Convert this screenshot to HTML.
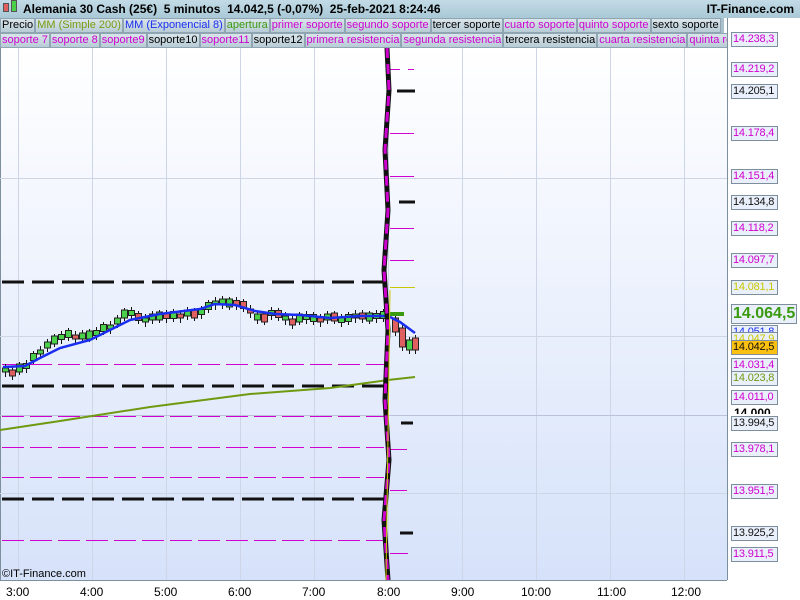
<!DOCTYPE html>
<html><head><meta charset="utf-8"><style>
*{margin:0;padding:0;box-sizing:border-box}
body{width:800px;height:600px;overflow:hidden;background:#fff;font-family:"Liberation Sans",sans-serif;position:relative}
#hdr{position:absolute;left:0;top:0;width:800px;height:18px;background:linear-gradient(#c2dbe6,#a9c8d6);font-weight:bold;font-size:12px;line-height:18px}
.leg{position:absolute;left:0;height:15px;display:flex;font-size:11px;line-height:13px;background:#a8c0cc}
.leg span{background:linear-gradient(#d9e5ea,#b8ccd6);border:1px solid #8fa6b2;padding:0 1px;white-space:nowrap}
.lb{position:absolute;left:731px;width:47px;height:15px;border:1px solid #7d8e9c;background:#eaf0fb;font-size:11px;line-height:13px;padding-left:1px;white-space:nowrap;overflow:hidden;letter-spacing:-0.2px}
.tl{position:absolute;top:585px;font-size:12px}
</style></head><body>
<svg width="800" height="600" style="position:absolute;left:0;top:0">
<defs><linearGradient id="bg" x1="0" y1="0" x2="0" y2="1"><stop offset="0" stop-color="#ffffff"/><stop offset="1" stop-color="#d6e2fa"/></linearGradient></defs>
<rect x="0" y="48" width="727" height="532" fill="url(#bg)"/>
<rect x="727" y="18" width="73" height="582" fill="#fff"/>
<rect x="0" y="580" width="727" height="20" fill="#fff"/>
<line x1="0.5" y1="48" x2="0.5" y2="580" stroke="#7d8e9c"/>
<line x1="727.5" y1="18" x2="727.5" y2="580" stroke="#7d8e9c"/>
<line x1="0" y1="580.5" x2="727" y2="580.5" stroke="#7d8e9c"/>
<g stroke="#cdd5e6" stroke-width="1">
<line x1="18.5" y1="48" x2="18.5" y2="580"/><line x1="92.5" y1="48" x2="92.5" y2="580"/><line x1="166.5" y1="48" x2="166.5" y2="580"/><line x1="240.5" y1="48" x2="240.5" y2="580"/><line x1="314.5" y1="48" x2="314.5" y2="580"/><line x1="388.5" y1="48" x2="388.5" y2="580"/><line x1="462.5" y1="48" x2="462.5" y2="580"/><line x1="536.5" y1="48" x2="536.5" y2="580"/><line x1="610.5" y1="48" x2="610.5" y2="580"/><line x1="684.5" y1="48" x2="684.5" y2="580"/>
<line x1="0" y1="178.5" x2="727" y2="178.5"/><line x1="0" y1="336.5" x2="727" y2="336.5"/><line x1="0" y1="415.5" x2="727" y2="415.5" stroke="#b8c2d8"/><line x1="0" y1="493.5" x2="727" y2="493.5"/>
</g>
<g stroke="#111" stroke-width="3" stroke-dasharray="22,8">
<line x1="2" y1="282" x2="384" y2="282"/><line x1="2" y1="386" x2="384" y2="386"/><line x1="2" y1="499" x2="384" y2="499"/>
</g>
<g stroke="#d000d0" stroke-width="1" stroke-dasharray="22,6">
<line x1="2" y1="364.5" x2="384" y2="364.5"/><line x1="2" y1="416.5" x2="384" y2="416.5"/><line x1="2" y1="447.5" x2="384" y2="447.5"/><line x1="2" y1="477.5" x2="384" y2="477.5"/><line x1="2" y1="540.5" x2="384" y2="540.5"/>
</g>
<path d="M0,430 L60,421 L150,407 L250,394 L330,388 L388,380 L415,377" fill="none" stroke="#6f9a10" stroke-width="2"/>
<g id="cd"></g>
<path d="M3,367 L25,366 L40,358 L60,348 L90,340 L110,330 L130,320 L160,314 L200,309 L215,304 L235,305 L255,311 L275,314 L300,315 L330,318 L360,316 L388,316 L400,322 L415,333" fill="none" stroke="#1a2ef0" stroke-width="2.5"/>
<g stroke="#111" stroke-width="3"><line x1="397" y1="91" x2="415" y2="91"/><line x1="399" y1="202" x2="415" y2="202"/><line x1="401" y1="423" x2="413" y2="423"/><line x1="400" y1="533" x2="413" y2="533"/></g>
<g stroke="#d000d0" stroke-width="1"><line x1="390" y1="69.5" x2="400" y2="69.5"/><line x1="408" y1="69.5" x2="414" y2="69.5"/><line x1="390" y1="133.5" x2="414" y2="133.5"/><line x1="390" y1="176.5" x2="414" y2="176.5"/><line x1="390" y1="228.5" x2="414" y2="228.5"/><line x1="390" y1="260.5" x2="414" y2="260.5"/><line x1="390" y1="449.5" x2="407" y2="449.5"/><line x1="390" y1="490.5" x2="407" y2="490.5"/><line x1="390" y1="553.5" x2="408" y2="553.5"/></g>
<line x1="390" y1="287.5" x2="415" y2="287.5" stroke="#c8c800"/>
<line x1="390" y1="314" x2="404" y2="314" stroke="#3a9a10" stroke-width="4"/>
<path d="M387,48 L389,90 L385,150 L388,210 L384,270 L388,330 L385,400 L389,460 L384,520 L388,580" fill="none" stroke="#111" stroke-width="5"/>
<path d="M387,48 L389,90 L385,150 L388,210 L384,270 L388,330 L385,400 L389,460 L384,520 L388,580" fill="none" stroke="#d000d0" stroke-width="3" stroke-dasharray="10,6"/>
<line x1="390" y1="290" x2="386" y2="580" stroke="#c8c800" stroke-width="1"/>
</svg>
<div id="hdr"><span style="position:absolute;left:3px;top:3px;width:6px;height:9px;background:#e06060;border:1px solid #555"></span><span style="position:absolute;left:11px;top:0px;width:6px;height:12px;background:#4bd04b;border:1px solid #555"></span><span style="position:absolute;left:23px;white-space:pre">Alemania 30 Cash (25€)  5 minutos  14.042,5 (-0,07%)  25-feb-2021 8:24:46</span><span style="position:absolute;right:6px">IT-Finance.com</span></div>
<div class="leg" style="top:18px;width:724px"><span>Precio</span><span style="color:#7a9a10">MM (Simple 200)</span><span style="color:#1a2ef0">MM (Exponencial 8)</span><span style="color:#3a9a10">apertura</span><span style="color:#d000d0">primer soporte</span><span style="color:#d000d0">segundo soporte</span><span>tercer soporte</span><span style="color:#d000d0">cuarto soporte</span><span style="color:#d000d0">quinto soporte</span><span>sexto soporte</span></div>
<div class="leg" style="top:33px;width:727px;overflow:hidden"><span style="color:#d000d0">soporte 7</span><span style="color:#d000d0">soporte 8</span><span style="color:#d000d0">soporte9</span><span>soporte10</span><span style="color:#d000d0">soporte11</span><span>soporte12</span><span style="color:#d000d0">primera resistencia</span><span style="color:#d000d0">segunda resistencia</span><span>tercera resistencia</span><span style="color:#d000d0">cuarta resistencia</span><span style="color:#d000d0">quinta resistencia</span></div>
<div class="lb" style="top:32px;color:#d000d0">14.238,3</div>
<div class="lb" style="top:62px;color:#d000d0">14.219,2</div>
<div class="lb" style="top:84px;color:#111">14.205,1</div>
<div class="lb" style="top:126px;color:#d000d0">14.178,4</div>
<div class="lb" style="top:169px;color:#d000d0">14.151,4</div>
<div class="lb" style="top:195px;color:#111">14.134,8</div>
<div class="lb" style="top:221px;color:#d000d0">14.118,2</div>
<div class="lb" style="top:253px;color:#d000d0">14.097,7</div>
<div class="lb" style="top:280px;color:#c8c800">14.081,1</div>
<div class="lb" style="top:304px;height:20px;width:66px;font-size:16px;line-height:18px;font-weight:bold;color:#3a9a10;letter-spacing:0">14.064,5</div>
<div class="lb" style="top:325px;color:#1a2ef0">14.051,8</div>
<div class="lb" style="top:332px;color:#c8c800">14.047,9</div>
<div class="lb" style="top:340px;background:#fcc010;color:#111">14.042,5</div>
<div class="lb" style="top:358px;color:#d000d0">14.031,4</div>
<div class="lb" style="top:371px;color:#6f9a10">14.023,8</div>
<div class="lb" style="top:390px;color:#d000d0">14.011,0</div>
<div style="position:absolute;left:734px;top:406px;font-size:12px;font-weight:bold;height:8px;overflow:hidden;line-height:14px">14.000</div>
<div class="lb" style="top:416px;color:#111">13.994,5</div>
<div class="lb" style="top:442px;color:#d000d0">13.978,1</div>
<div class="lb" style="top:484px;color:#d000d0">13.951,5</div>
<div class="lb" style="top:526px;color:#111">13.925,2</div>
<div class="lb" style="top:547px;color:#d000d0">13.911,5</div>
<div style="position:absolute;left:2px;top:568px;font-size:11px">©IT-Finance.com</div>
<div class="tl" style="left:6px">3:00</div><div class="tl" style="left:80px">4:00</div><div class="tl" style="left:154px">5:00</div><div class="tl" style="left:228px">6:00</div><div class="tl" style="left:302px">7:00</div><div class="tl" style="left:377px">8:00</div><div class="tl" style="left:451px">9:00</div><div class="tl" style="left:521px">10:00</div><div class="tl" style="left:597px">11:00</div><div class="tl" style="left:671px">12:00</div>
<script>
var ys=[370,373,368,366,357,352,345,340,337,334,337,336,335,333,328,327,321,314,313,317,320,317,316,316,315,316,313,314,312,306,303,302,303,303,305,311,317,318,313,314,318,322,318,317,318,320,317,317,320,318,316,316,317,316,315];
var s='',x=5;
for(var i=0;i<ys.length;i++){var y=ys[i],h=(i*7%5)+2;
var prev=i?ys[i-1]:y;var up=y<prev||i%4==0;
s+='<line x1="'+(x+0.5)+'" y1="'+(y-6)+'" x2="'+(x+0.5)+'" y2="'+(y+7)+'" stroke="#111"/>';
s+='<rect x="'+(x-2.5)+'" y="'+(y-h/2-1)+'" width="6" height="'+(h+2)+'" fill="'+(up?'#4bd04b':'#e06060')+'" stroke="#222" stroke-width="1"/>';
x+=7;}
var ex=[[395,318,332,'#e06060'],[402,328,347,'#e06060'],[409,340,350,'#4bd04b'],[415,338,350,'#e06060']];
ex.forEach(function(e){s+='<line x1="'+(e[0]+0.5)+'" y1="'+(e[1]-3)+'" x2="'+(e[0]+0.5)+'" y2="'+(e[2]+4)+'" stroke="#111"/><rect x="'+(e[0]-2.5)+'" y="'+e[1]+'" width="6" height="'+(e[2]-e[1])+'" fill="'+e[3]+'" stroke="#222"/>';});
document.getElementById('cd').innerHTML=s;
</script>
</body></html>
